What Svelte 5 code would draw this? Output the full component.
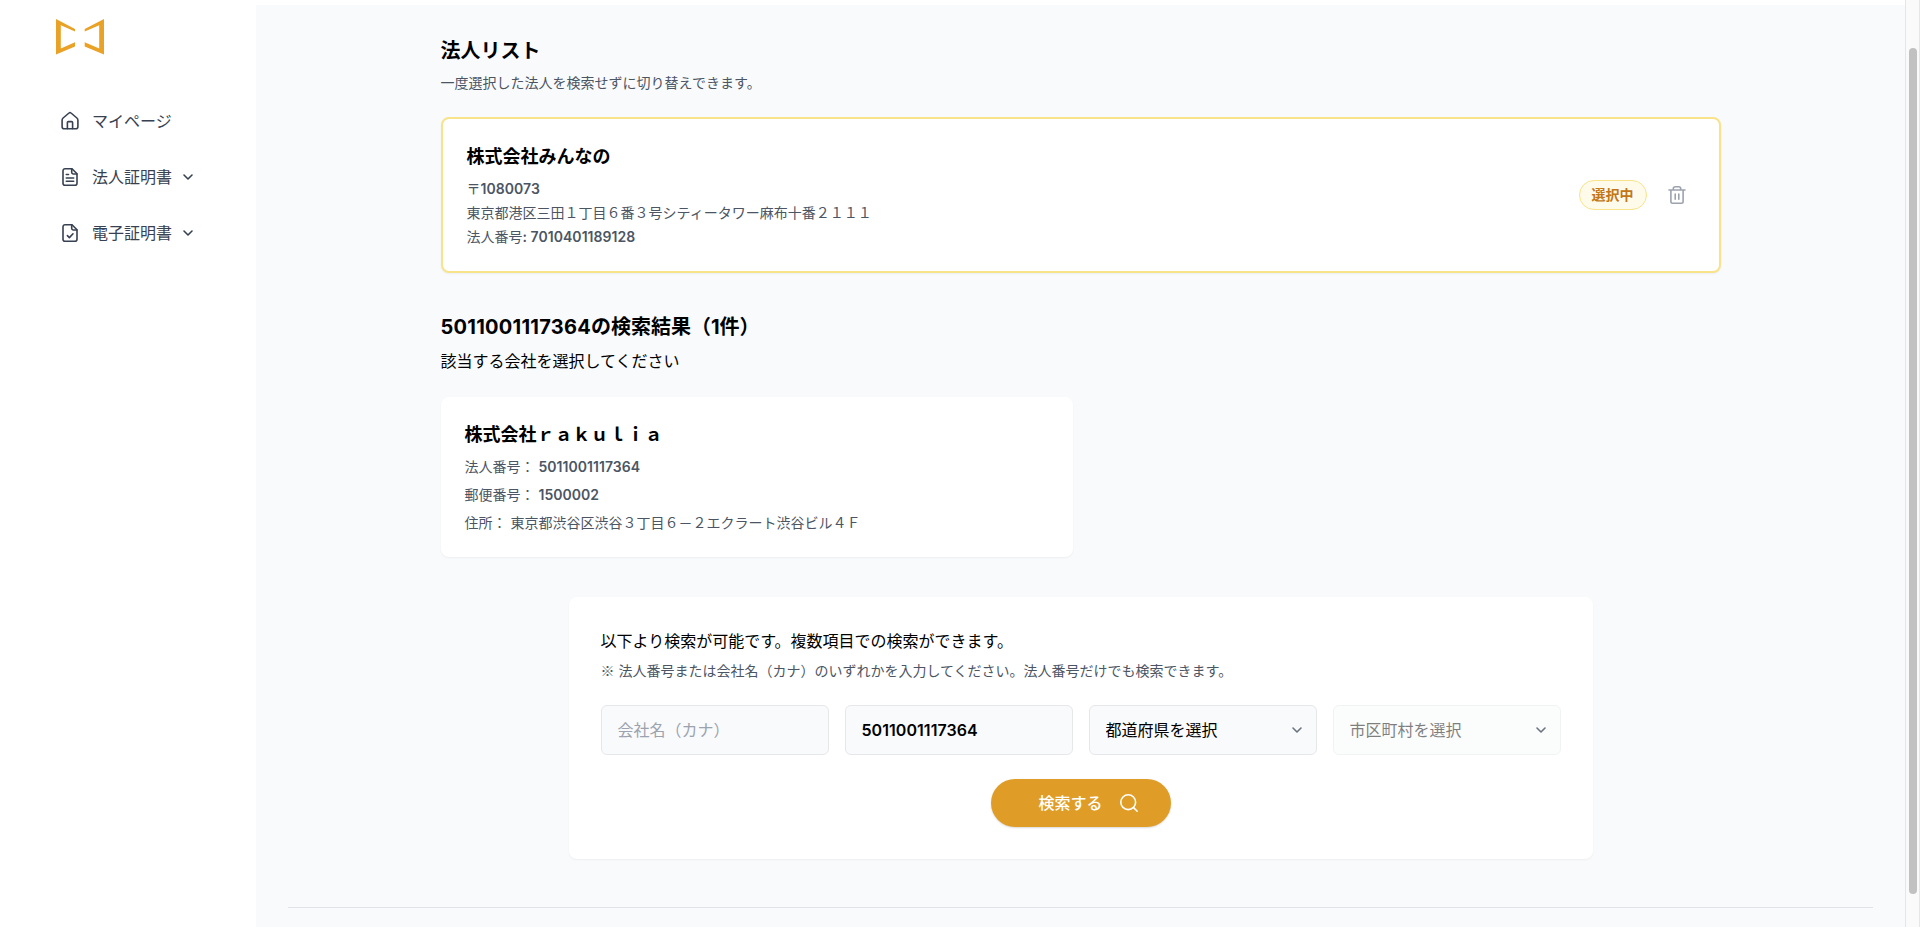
<script lang="ts">
	type Field = { label: string; value: string; numeric: boolean };

	const navItems = [
		{ label: 'マイページ', icon: 'home', expandable: false },
		{ label: '法人証明書', icon: 'document', expandable: true },
		{ label: '電子証明書', icon: 'check', expandable: true }
	];

	const resultFields: Field[] = [
		{ label: '法人番号', value: '5011001117364', numeric: true },
		{ label: '郵便番号', value: '1500002', numeric: true },
		{ label: '住所', value: '東京都渋谷区渋谷３丁目６－２エクラート渋谷ビル４Ｆ', numeric: false }
	];

	let companyName = $state('');
	let corporateNumber = $state('5011001117364');
	let prefecture = $state('');
	let city = $state('');
</script>

{#snippet chevron()}
	<svg class="chevron" viewBox="0 0 16 16" width="16" height="16">
		<path d="M4 6l4 4 4-4" />
	</svg>
{/snippet}

<div class="app">
	<aside>
		<svg class="logo" viewBox="0 0 48 36" width="48" height="36">
			<path d="M0 0 L19 10 V12.4 L4.8 6.2 V29.5 L19 23.2 V27.6 L0 35.6 Z" />
			<path d="M48 0 L28.7 10 V12.4 L43.2 6.2 V29.5 L28.7 23.2 V27.6 L48 35.6 Z" />
		</svg>

		<nav>
			{#each navItems as item}
				<a href="#{item.icon}">
					<svg class="nav-icon" viewBox="0 0 20 20" width="20" height="20">
						{#if item.icon === 'home'}
							<path d="M2.1 9.2c0-1 .3-1.6 1-2.2L9 2a1.5 1.5 0 0 1 2 0l5.9 5c.7.6 1 1.2 1 2.2v6.6a2 2 0 0 1-2 2H4.1a2 2 0 0 1-2-2z" />
							<path d="M7.4 17.6v-6a1 1 0 0 1 1-1h3.2a1 1 0 0 1 1 1v6" />
						{:else}
							<path d="M12 1.7H5a2 2 0 0 0-2 2v12.6a2 2 0 0 0 2 2h10a2 2 0 0 0 2-2V6.7z" />
							<path d="M11.7 1.9v3.3a1.8 1.8 0 0 0 1.8 1.8h3.3" />
							{#if item.icon === 'document'}
								<path d="M6.3 7.5h2.2M6.3 11h7.4M6.3 14.2h7.4" />
							{:else}
								<path d="M7.4 12.6l2 2 3.6-3.8" />
							{/if}
						{/if}
					</svg>
					<span>{item.label}</span>
					{#if item.expandable}
						{@render chevron()}
					{/if}
				</a>
			{/each}
		</nav>
	</aside>

	<main>
		<div class="content">
			<section>
				<h1>法人リスト</h1>
				<p class="note">一度選択した法人を検索せずに切り替えできます。</p>

				<div class="card selected">
					<div class="details">
						<h2>株式会社みんなの</h2>
						<p>〒<span class="num">1080073</span></p>
						<p>東京都港区三田１丁目６番３号シティータワー麻布十番２１１１</p>
						<p>法人番号<span class="num">: 7010401189128</span></p>
					</div>
					<div class="actions">
						<span class="badge">選択中</span>
						<button class="delete" aria-label="削除">
							<svg viewBox="0 0 20 20" width="20" height="20">
								<path d="M2 5h16M3.9 5v11.6a1.7 1.7 0 0 0 1.7 1.7h8.8a1.7 1.7 0 0 0 1.7-1.7V5M6.3 5V3.7a2 2 0 0 1 2-2h3.4a2 2 0 0 1 2 2V5M8.2 9v5.2M11.8 9v5.2" />
							</svg>
						</button>
					</div>
				</div>
			</section>

			<section>
				<h1><span class="num">5011001117364</span>の検索結果（1件）</h1>
				<p class="lead">該当する会社を選択してください</p>

				<div class="card result">
					<h2>株式会社ｒａｋｕｌｉａ</h2>
					{#each resultFields as field}
						<p>{field.label}： <span class:num={field.numeric}>{field.value}</span></p>
					{/each}
				</div>
			</section>

			<form class="card search" onsubmit={(e) => e.preventDefault()}>
				<p class="search-title">以下より検索が可能です。複数項目での検索ができます。</p>
				<p class="note"><span class="mark">※</span> 法人番号または会社名（カナ）のいずれかを入力してください。法人番号だけでも検索できます。</p>

				<div class="fields">
					<input type="text" placeholder="会社名（カナ）" bind:value={companyName} />
					<input class="num" type="text" placeholder="法人番号" bind:value={corporateNumber} />
					<div class="select">
						<select bind:value={prefecture}>
							<option value="">都道府県を選択</option>
						</select>
						{@render chevron()}
					</div>
					<div class="select">
						<select bind:value={city} disabled>
							<option value="">市区町村を選択</option>
						</select>
						{@render chevron()}
					</div>
				</div>

				<button class="submit">
					検索する
					<svg viewBox="0 0 20 20" width="20" height="20">
						<circle cx="9.2" cy="9.2" r="7.4" />
						<path d="M14.6 14.6l3.6 3.6" />
					</svg>
				</button>
			</form>
		</div>
		<hr />
	</main>

	<div class="scrollbar"><div class="thumb"></div></div>
</div>

<style>
	:global(body) {
		margin: 0;
		overflow: hidden;
	}

	.app {
		display: flex;
		height: 100vh;
		overflow: hidden;
		background: #fff;
		color: #000;
		font-family: Inter, 'Noto Sans CJK JP', sans-serif;
		font-size: 16px;
		line-height: 24px;
	}

	h1,
	h2,
	p {
		margin: 0;
	}

	svg {
		display: block;
		flex: none;
		fill: none;
		stroke: currentColor;
		stroke-width: 1.6;
		stroke-linecap: round;
		stroke-linejoin: round;
	}

	aside {
		box-sizing: border-box;
		width: 256px;
		flex: none;
		padding-top: 19px;
	}

	.logo {
		margin-left: 56px;
		fill: #e9a126;
		stroke: none;
	}

	nav {
		display: flex;
		flex-direction: column;
		gap: 32px;
		margin: 54px 0 0 60px;
	}

	nav a {
		display: flex;
		align-items: center;
		color: #374151;
		text-decoration: none;
	}

	nav span {
		margin: 0 8px 0 12px;
	}

	main {
		box-sizing: border-box;
		flex: 1;
		margin-top: 5px;
		padding: 32px 32px 0;
		background: #f9fafc;
	}

	.content {
		display: flex;
		flex-direction: column;
		gap: 40px;
		width: 1280px;
		margin: 0 auto;
	}

	h1 {
		margin-bottom: 8px;
		font-size: 20px;
		font-weight: 700;
		line-height: 28px;
	}

	h2 {
		font-size: 18px;
		font-weight: 700;
		line-height: 28px;
	}

	.num {
		font-weight: 600;
		letter-spacing: 0.003em;
	}

	h1 .num {
		font-weight: inherit;
		letter-spacing: 0.013em;
	}

	.note {
		color: #4b5563;
		font-size: 14px;
		line-height: 20px;
	}

	.mark {
		font-family: 'Noto Sans CJK JP', sans-serif;
		line-height: 1;
	}

	.card {
		box-sizing: border-box;
		border-radius: 8px;
		background: #fff;
		box-shadow: 0 1px 2px rgba(0, 0, 0, 0.05);
	}

	.selected,
	.result {
		margin-top: 24px;
		padding: 24px;
		color: #4b5563;
		font-size: 14px;
		line-height: 20px;
	}

	.selected h2,
	.result h2 {
		color: #000;
	}

	.selected {
		display: flex;
		align-items: center;
		justify-content: space-between;
		border: 2px solid #f8e38a;
	}

	.details {
		display: flex;
		flex-direction: column;
		gap: 4px;
	}

	.details h2 {
		margin-bottom: 4px;
	}

	.actions {
		display: flex;
		align-items: center;
		gap: 12px;
	}

	.badge {
		padding: 4px 12px;
		border: 1px solid #f8e38a;
		border-radius: 15px;
		background: #fffbeb;
		color: #c27618;
		font-weight: 700;
	}

	.delete {
		padding: 8px;
		border: none;
		background: none;
		color: #9ca3af;
		cursor: pointer;
	}

	.result {
		display: flex;
		flex-direction: column;
		gap: 8px;
		width: 632px;
	}

	.search {
		width: 1024px;
		margin: 0 auto;
		padding: 32px;
	}

	.search-title {
		margin-bottom: 8px;
	}

	.fields {
		display: grid;
		grid-template-columns: repeat(4, 1fr);
		gap: 16px;
		margin: 24px 0;
	}

	.select {
		position: relative;
	}

	input,
	select {
		box-sizing: border-box;
		display: block;
		width: 100%;
		height: 50px;
		padding: 0 16px;
		border: 1px solid #e5e7eb;
		border-radius: 6px;
		background: #f9fafb;
		color: #000;
		font-family: inherit;
		font-size: inherit;
		appearance: none;
	}

	input::placeholder {
		color: #9ca3af;
	}

	select:disabled {
		opacity: 0.5;
	}

	.select .chevron {
		position: absolute;
		top: 17px;
		right: 12px;
		color: #6b7280;
		pointer-events: none;
	}

	.submit {
		display: flex;
		align-items: center;
		justify-content: center;
		gap: 16px;
		width: 180px;
		height: 48px;
		margin: 0 auto;
		padding: 0 32px 0 48px;
		border: none;
		border-radius: 24px;
		background: #df9d27;
		box-shadow: 0 1px 2px rgba(0, 0, 0, 0.15);
		color: #fff;
		font: inherit;
		font-weight: 500;
		white-space: nowrap;
		cursor: pointer;
	}

	hr {
		margin: 48px 0 0;
		border: none;
		border-top: 1px solid #e1e3e6;
	}

	.scrollbar {
		box-sizing: border-box;
		width: 15px;
		padding: 48px 2px 0 3px;
		border: solid #e6e6e6;
		border-width: 0 1px;
		background: #fafafa;
	}

	.thumb {
		width: 8px;
		height: 846px;
		border-radius: 4px;
		background: #c1c1c1;
	}
</style>
